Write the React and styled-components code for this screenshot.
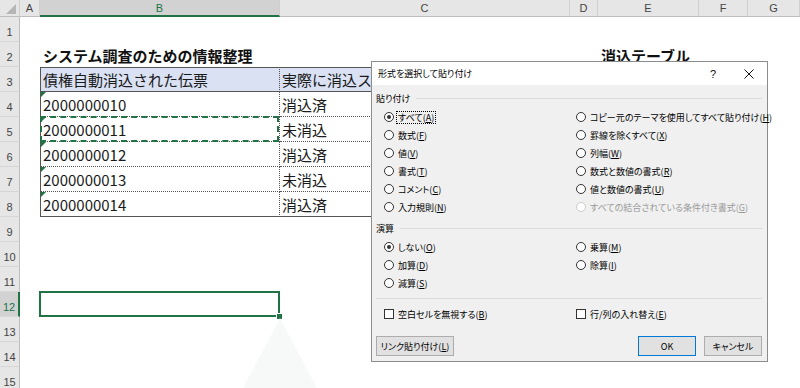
import React from 'react'
import styled, { createGlobalStyle } from 'styled-components'

const GlobalStyle = createGlobalStyle`
  html, body { margin: 0; padding: 0; background: #fff; }
  body { font-family: "Noto Sans CJK JP", "Noto Sans", sans-serif; }
`

const COLS = ['A', 'B', 'C', 'D', 'E', 'F', 'G']
const GREEN = '#217346'

const table = [
    ['債権自動消込された伝票', '実際に消込ステータス'],
    ['2000000010', '消込済'],
    ['2000000011', '未消込'],
    ['2000000012', '消込済'],
    ['2000000013', '未消込'],
    ['2000000014', '消込済'],
]

const pasteLeft = [
    ['すべて', 'A', true],
    ['数式', 'F'],
    ['値', 'V'],
    ['書式', 'T'],
    ['コメント', 'C'],
    ['入力規則', 'N'],
]
const pasteRight = [
    ['コピー元のテーマを使用してすべて貼り付け', 'H'],
    ['罫線を除くすべて', 'X'],
    ['列幅', 'W'],
    ['数式と数値の書式', 'R'],
    ['値と数値の書式', 'U'],
    ['すべての結合されている条件付き書式', 'G', false, true],
]

function Sheet() {
    const rows = []
    for (let r = 1; r <= 15; r++) {
        rows.push(<RowHead key={'h' + r} $active={r === 12}>{r}</RowHead>)
        COLS.forEach((c) => {
            const key = c + r
            const t = r - 3
            if (r >= 3 && r <= 8 && (c === 'B' || c === 'C')) {
                const text = table[t][c === 'B' ? 0 : 1]
                rows.push(
                    <TCell key={key} $head={t === 0} $col={c} $last={r === 8}
                        $flag={c === 'B' && t > 0} $copied={key === 'B5'}>
                        {text}
                    </TCell>
                )
            } else if (key === 'B2') {
                rows.push(<Heading key={key}>システム調査のための情報整理</Heading>)
            } else if (key === 'E2') {
                rows.push(<Heading key={key}>消込テーブル</Heading>)
            } else {
                rows.push(<Cell key={key} $selected={key === 'B12'} />)
            }
        })
    }
    return (
        <Grid>
            <Corner />
            {COLS.map((c) => <ColHead key={c} $active={c === 'B'}>{c}</ColHead>)}
            {rows}
        </Grid>
    )
}

function Label({ text, k }) {
    return <>{text}(<Key>{k}</Key>)</>
}

function Option({ text, k, on, disabled, focus }) {
    return (
        <Opt $disabled={disabled}>
            <Radio $on={on} $disabled={disabled} />
            <OptText $focus={focus}><Label text={text} k={k} /></OptText>
        </Opt>
    )
}

function PasteDialog() {
    return (
        <Dialog>
            <TitleBar>
                <Title>形式を選択して貼り付け</Title>
                <TitleBtn>?</TitleBtn>
                <TitleBtn>
                    <svg width="10" height="10" viewBox="0 0 10 10">
                        <path d="M0.5 0.5 L9.5 9.5 M9.5 0.5 L0.5 9.5" stroke="#111" strokeWidth="1" />
                    </svg>
                </TitleBtn>
            </TitleBar>
            <Body>
                <GroupLabel>貼り付け</GroupLabel>
                <Options>
                    {pasteLeft.map((l, i) => {
                        const rr = pasteRight[i]
                        return (
                            <React.Fragment key={i}>
                                <Option text={l[0]} k={l[1]} on={l[2]} focus={l[2]} />
                                <Option text={rr[0]} k={rr[1]} disabled={rr[3]} />
                            </React.Fragment>
                        )
                    })}
                </Options>
                <GroupLabel $gap={5}>演算</GroupLabel>
                <Options>
                    <Option text="しない" k="O" on />
                    <Option text="乗算" k="M" />
                    <Option text="加算" k="D" />
                    <Option text="除算" k="I" />
                    <Option text="減算" k="S" />
                </Options>
                <Separator />
                <Options $top={6}>
                    <Opt><Check /><span><Label text="空白セルを無視する" k="B" /></span></Opt>
                    <Opt><Check /><span><Label text="行/列の入れ替え" k="E" /></span></Opt>
                </Options>
                <ButtonRow>
                    <Button $w={78}><Label text="リンク貼り付け" k="L" /></Button>
                    <Spacer />
                    <Button $w={58} $primary>OK</Button>
                    <Button $w={58}>キャンセル</Button>
                </ButtonRow>
            </Body>
        </Dialog>
    )
}

export default function App() {
    return (
        <>
            <GlobalStyle />
            <Page>
                <Sheet />
                <Glare width="74" height="70" viewBox="0 0 74 70">
                    <polygon points="37,0 74,70 0,70" fill="#f7f9f8" />
                </Glare>
                <PasteDialog />
            </Page>
        </>
    )
}

const Page = styled.div`
position: relative;
width: 800px;
height: 388px;
overflow: hidden;
background: #fff;
`;

const Grid = styled.div`
display: grid;
grid-template-columns: 20px 20px 240px 290px 28px 101px 49px 1fr;
grid-template-rows: 17px repeat(15, 25px);
`;

const Corner = styled.div`
position: relative;
box-sizing: border-box;
background: #e6e6e6;
border-right: 1px solid #cfcfcf;
border-bottom: 1px solid #bdbdbd;

&::after {
    content: '';
    position: absolute;
    right: 3px;
    bottom: 2px;
    border-style: solid;
    border-width: 0 0 10px 10px;
    border-color: transparent transparent #b5b5b5 transparent;
}
`;

const ColHead = styled.div`
box-sizing: border-box;
display: flex;
align-items: center;
justify-content: center;
background: ${p => p.$active ? '#d2d2d2' : '#e6e6e6'};
color: ${p => p.$active ? GREEN : '#444'};
border-right: 1px solid #cfcfcf;
border-bottom: ${p => p.$active ? `2px solid ${GREEN}` : '1px solid #bdbdbd'};
font: 11px "Liberation Sans", Arial, sans-serif;
padding-top: ${p => p.$active ? '1px' : '0'};
`;

const RowHead = styled.div`
box-sizing: border-box;
display: flex;
align-items: center;
justify-content: center;
padding-top: 6px;
background: ${p => p.$active ? '#d2d2d2' : '#e6e6e6'};
color: ${p => p.$active ? GREEN : '#444'};
border-right: ${p => p.$active ? `2px solid ${GREEN}` : '1px solid #bdbdbd'};
border-bottom: 1px solid #d6d6d6;
font: 11px "Liberation Sans", Arial, sans-serif;
`;

const Cell = styled.div`
position: relative;

&::before {
    content: '';
    display: ${p => p.$selected ? 'block' : 'none'};
    position: absolute;
    inset: -1px 0 0 -1px;
    border: 2px solid ${GREEN};
}

&::after {
    content: '';
    display: ${p => p.$selected ? 'block' : 'none'};
    position: absolute;
    right: -3px;
    bottom: -3px;
    width: 5px;
    height: 5px;
    background: ${GREEN};
    border: 1px solid #fff;
}
`;

const Heading = styled.div`
display: flex;
align-items: center;
padding-left: 3px;
padding-top: 2px;
white-space: nowrap;
font-size: 15px;
font-weight: bold;
color: #111;
`;

const TCell = styled.div`
position: relative;
box-sizing: border-box;
display: flex;
align-items: center;
padding-left: 2px;
white-space: nowrap;
font-size: 15px;
color: #1a1a1a;
background: ${p => p.$head ? '#d9e1f2' : '#fff'};
border-top: ${p => p.$head ? '1px solid #555' : 'none'};
border-bottom: 1px ${p => p.$last || p.$head ? 'solid' : 'dotted'} #555;
border-left: ${p => p.$col === 'B' ? '1px solid #555' : 'none'};
border-right: 1px ${p => p.$col === 'B' ? 'dotted' : 'solid'} #555;

&::before {
    content: '';
    display: ${p => p.$flag ? 'block' : 'none'};
    position: absolute;
    left: 0;
    top: 0;
    border-style: solid;
    border-width: 5px 5px 0 0;
    border-color: ${GREEN} transparent transparent transparent;
}

&::after {
    content: '';
    display: ${p => p.$copied ? 'block' : 'none'};
    position: absolute;
    inset: -1px 0 -1px -1px;
    border: 2px dashed ${GREEN};
}
`;

const Glare = styled.svg`
position: absolute;
left: 243px;
top: 318px;
`;

const Dialog = styled.div`
position: absolute;
left: 371px;
top: 61px;
width: 397px;
height: 301px;
box-sizing: border-box;
display: flex;
flex-direction: column;
border: 1px solid #8c8c8c;
background: #f0f0f0;
color: #000;
font-family: "Noto Sans CJK JP", sans-serif;
font-size: 9px;
font-feature-settings: "palt" 1;
`;

const TitleBar = styled.div`
display: flex;
align-items: center;
height: 23px;
background: #fff;
padding-left: 6px;
`;

const Title = styled.div`
flex: 1;
font-size: 9px;
`;

const TitleBtn = styled.div`
width: 36px;
height: 23px;
display: flex;
align-items: center;
justify-content: center;
font: 11px "Liberation Sans", Arial, sans-serif;
color: #111;
`;

const Body = styled.div`
display: flex;
flex-direction: column;
padding: 0 5px 0 4px;
`;

const GroupLabel = styled.div`
display: flex;
align-items: center;
gap: 6px;
height: 14px;
margin-top: ${p => p.$gap ?? 6}px;

&::after {
    content: '';
    flex: 1;
    height: 1px;
    background: #dcdcdc;
}
`;

const Options = styled.div`
display: grid;
grid-template-columns: 192px 1fr;
grid-auto-rows: 18px;
margin-top: ${p => p.$top ?? 3}px;
padding-left: 8px;
`;

const Opt = styled.div`
display: flex;
align-items: center;
gap: 3px;
white-space: nowrap;
color: ${p => p.$disabled ? '#9a9a9a' : '#000'};
`;

const Radio = styled.span`
position: relative;
box-sizing: border-box;
width: 10px;
height: 10px;
border-radius: 50%;
border: 1px solid ${p => p.$disabled ? '#cccccc' : '#333'};
background: #fff;
flex: none;

&::after {
    content: '';
    display: ${p => p.$on ? 'block' : 'none'};
    position: absolute;
    inset: 2px;
    border-radius: 50%;
    background: #333;
}
`;

const Check = styled.span`
box-sizing: border-box;
width: 10px;
height: 10px;
border: 1px solid #333;
background: #fff;
flex: none;
margin-right: 1px;
`;

const OptText = styled.span`
padding: 0 1px;
line-height: 11px;
outline: ${p => p.$focus ? '1px dotted #000' : 'none'};
`;

const Key = styled.span`
text-decoration: underline;
`;

const Separator = styled.div`
height: 1px;
background: #dcdcdc;
margin-top: 6px;
`;

const ButtonRow = styled.div`
display: flex;
gap: 8px;
margin-top: 13px;
`;

const Spacer = styled.div`
flex: 1;
`;

const Button = styled.button`
box-sizing: border-box;
width: ${p => p.$w}px;
height: 20px;
padding: 0;
white-space: nowrap;
background: #e1e1e1;
border: 1px solid ${p => p.$primary ? '#0078d7' : '#adadad'};
font-family: "Noto Sans CJK JP", sans-serif;
font-size: 9px;
font-feature-settings: "palt" 1;
color: #000;
`;
